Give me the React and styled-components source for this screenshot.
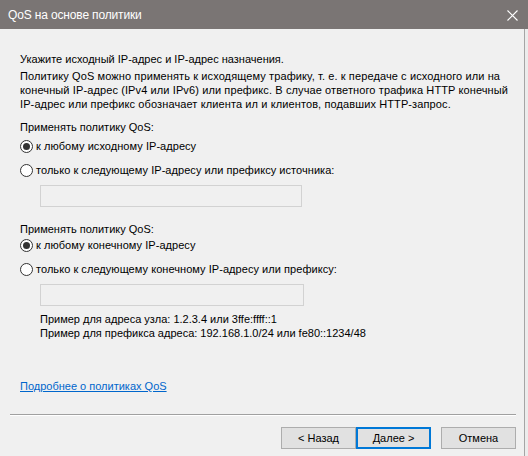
import React from 'react';
import styled, { createGlobalStyle } from 'styled-components';

const GlobalStyle = createGlobalStyle`
  html, body {
    margin: 0;
    padding: 0;
    background: #ececec;
  }
  body {
    width: 528px;
    height: 456px;
    overflow: hidden;
    font-family: "Liberation Sans", Arial, sans-serif;
    font-size: 11px;
    color: #000;
  }
`;

const Window = styled.div`
  display: flex;
  flex-direction: column;
  width: 528px;
  height: 456px;
`;

const TitleBar = styled.div`
  display: flex;
  align-items: center;
  justify-content: space-between;
  height: 29px;
  padding: 0 10px 0 8px;
  background: #7a7574;
  color: #fff;
  font-size: 12px;
  letter-spacing: -0.15px;
  flex-shrink: 0;
`;

const CloseButton = styled.div`
  display: flex;
  width: 11px;
  height: 11px;
  margin-top: 1px;
`;

const Body = styled.div`
  flex: 1;
  display: flex;
  flex-direction: column;
  width: 525px;
  background: #f0f0f0;
  border-right: 1px solid #a5a5a5;
  padding: 23px 0 0 20px;
  box-sizing: border-box;
`;

const Text = styled.div`
  line-height: 14px;
  white-space: nowrap;
  margin-top: ${p => p.$top || 0}px;
  padding-left: ${p => p.$indent || 0}px;
  letter-spacing: ${p => p.$spacing || 0}px;
`;

const RadioRow = styled.label`
  display: flex;
  align-items: center;
  height: 16px;
  line-height: 14px;
  margin-top: ${p => p.$top || 0}px;
  white-space: nowrap;
  letter-spacing: 0.05px;
`;

const RadioMark = styled.span`
  display: flex;
  align-items: center;
  justify-content: center;
  width: 13px;
  height: 13px;
  margin-right: 3px;
  border: 1px solid #333;
  border-radius: 50%;
  background: #fff;
  box-sizing: border-box;

  &::after {
    content: '';
    display: ${p => (p.$checked ? 'block' : 'none')};
    width: 7px;
    height: 7px;
    border-radius: 50%;
    background: #333;
  }
`;

const AddressInput = styled.div`
  width: ${p => p.$width}px;
  height: 22px;
  margin: ${p => p.$top}px 0 0 20px;
  border: 1px solid #d2d2d2;
  background: #f0f0f0;
  box-sizing: border-box;
`;

const Link = styled.a`
  align-self: flex-start;
  margin-top: 39px;
  line-height: 14px;
  color: #0066cc;
  text-decoration: underline;
`;

const Footer = styled.div`
  margin-top: auto;
  display: flex;
  flex-direction: column;
  padding: 0 8px 7px 0;
`;

const Separator = styled.div`
  height: 0;
  margin-left: -10px;
  border-top: 1px solid #a0a0a0;
  border-bottom: 1px solid #fff;
`;

const Buttons = styled.div`
  display: flex;
  justify-content: flex-end;
  margin-top: 11px;
`;

const Button = styled.button`
  width: 75px;
  height: 22px;
  margin-left: ${p => p.$gap}px;
  padding: 0;
  font-family: inherit;
  font-size: 11px;
  color: #000;
  background: #e1e1e1;
  border: ${p => (p.$focused ? '2px solid #0078d7' : '1px solid #adadad')};
  box-sizing: border-box;
`;

const Radio = ({ checked, top, children }) => (
  <RadioRow $top={top}>
    <RadioMark $checked={checked} />
    {children}
  </RadioRow>
);

export default function App() {
  return (
    <>
      <GlobalStyle />
      <Window>
        <TitleBar>
          <span>QoS на основе политики</span>
          <CloseButton>
            <svg width="11" height="11" viewBox="0 0 11 11">
              <path d="M0.5 0.5 L10.5 10.5 M10.5 0.5 L0.5 10.5" stroke="#fff" strokeWidth="1.1" />
            </svg>
          </CloseButton>
        </TitleBar>
        <Body>
          <Text>Укажите исходный IP-адрес и IP-адрес назначения.</Text>
          <Text $top={3} $spacing={0.11}>
            Политику QoS можно применять к исходящему трафику, т. е. к передаче с исходного или на
            <br />
            конечный IP-адрес (IPv4 или IPv6) или префикс. В случае ответного трафика HTTP конечный
            <br />
            IP-адрес или префикс обозначает клиента ил и клиентов, подавших HTTP-запрос.
          </Text>
          <Text $top={9}>Применять политику QoS:</Text>
          <Radio checked top={4}>к любому исходному IP-адресу</Radio>
          <Radio top={8}>только к следующему IP-адресу или префиксу источника:</Radio>
          <AddressInput $top={7} $width={262} />
          <Text $top={15}>Применять политику QoS:</Text>
          <Radio checked top={1}>к любому конечному IP-адресу</Radio>
          <Radio top={8}>только к следующему конечному IP-адресу или префиксу:</Radio>
          <AddressInput $top={7} $width={264} />
          <Text $top={6} $indent={20}>
            Пример для адреса узла: 1.2.3.4 или 3ffe:ffff::1
            <br />
            Пример для префикса адреса: 192.168.1.0/24 или fe80::1234/48
          </Text>
          <Link href="#">Подробнее о политиках QoS</Link>
          <Footer>
            <Separator />
            <Buttons>
              <Button $gap={0}>&lt; Назад</Button>
              <Button $gap={0} $focused>Далее &gt;</Button>
              <Button $gap={10}>Отмена</Button>
            </Buttons>
          </Footer>
        </Body>
      </Window>
    </>
  );
}
